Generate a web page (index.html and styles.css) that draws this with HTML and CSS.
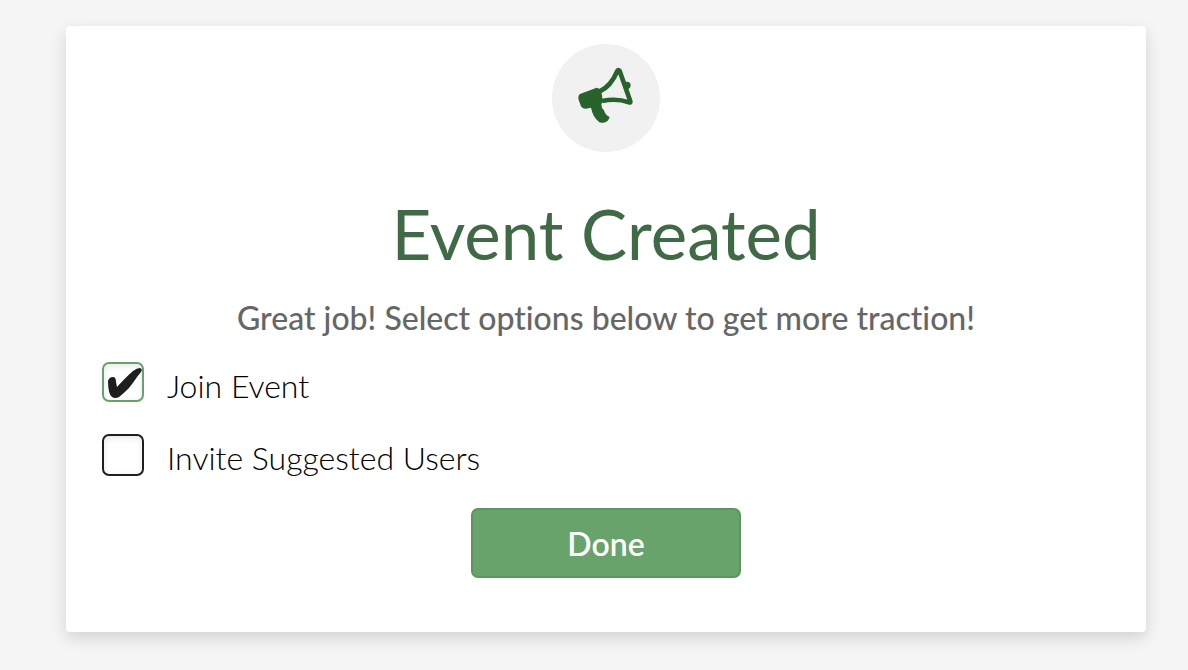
FILE: index.html
```html
<!DOCTYPE html>
<html lang="en">
<head>
  <meta charset="UTF-8">
  <meta name="viewport" content="width=device-width, initial-scale=1">
  <title>Event Created</title>
  <link rel="stylesheet" href="styles.css">
</head>
<body>
  <main class="card">
    <div class="card-icon">
      <svg viewBox="3 9 210 210" aria-hidden="true">
        <path class="horn" d="M88 95 C112 84 130 62 142 33 Q145 28 149 33 L181 124 Q182 129 177 127 C152 118 124 117 96 123"/>
        <path class="body" d="M30 102 L80 83 L92 88 Q97 106 98 124 L94 133 Q94 144 102 151 Q104 164 119 171 Q115 186 101 188 Q89 190 85 184 Q68 169 63 143 L48 146 Q37 147 33 139 L26 120 Q23 107 30 102 Z"/>
        <path class="body" d="M161 68 C172 62 183 66 182 77 Q180 87 169 89 Z"/>
      </svg>
    </div>
    <h1 class="title">Event Created</h1>
    <form class="options">
      <p class="subtitle">Great job! Select options below to get more traction!</p>
      <div class="option">
        <input type="checkbox" class="checkbox" id="join" checked>
        <label for="join">Join Event</label>
      </div>
      <div class="option">
        <input type="checkbox" class="checkbox" id="invite">
        <label for="invite">Invite Suggested Users</label>
      </div>
      <button type="button" class="done">Done</button>
    </form>
  </main>
</body>
</html>
```
FILE: styles.css
```css
* {
  box-sizing: border-box;
}

body {
  margin: 0;
  padding: 26px 42px 38px 66px;
  background: #f5f5f5;
  font-family: Lato, sans-serif;
  font-variant-ligatures: none;
}

.card {
  padding: 18px 36px 54px;
  background: #fff;
  border-radius: 4px;
  box-shadow: 0 6px 16px rgba(0, 0, 0, 0.14);
}

.card-icon {
  display: flex;
  align-items: center;
  justify-content: center;
  width: 108px;
  height: 108px;
  margin: 0 auto;
  border-radius: 50%;
  background: #f1f1f1;
}

.card-icon svg {
  width: 70px;
  height: 70px;
}

.horn {
  fill: none;
  stroke: #28632b;
  stroke-width: 14;
  stroke-linejoin: round;
}

.body {
  fill: #28632b;
}

.title {
  margin: 40px 0 22px;
  color: #406a46;
  font-size: 69px;
  font-weight: 400;
  line-height: 84px;
  text-align: center;
}

.subtitle {
  margin: 0 0 24px;
  color: #666;
  font-size: 32px;
  font-weight: 500;
  line-height: 40px;
  text-align: center;
}

.option {
  display: flex;
  align-items: flex-start;
  gap: 23px;
  margin-bottom: 30px;
  color: #000;
  font-size: 32px;
  font-weight: 300;
  line-height: 42px;
}

.option:last-of-type {
  margin-bottom: 32px;
}

.option label {
  padding-top: 3px;
  margin-bottom: -3px;
}

.checkbox {
  appearance: none;
  width: 42px;
  height: 42px;
  margin: 0;
  border: 2px solid #1e1e1e;
  border-radius: 7px;
  background: #fff;
  box-shadow: inset 0 2px 6px rgba(0, 0, 0, 0.1);
}

.checkbox:checked {
  height: 40px;
  border-color: #68a26b;
}

/* tick mark */
.checkbox:checked::before {
  content: "";
  display: block;
  width: 38px;
  height: 36px;
  background: #1e1e1e;
  clip-path: path("M4 17 Q5 13 9 13 Q12 13 12 18 L13 23 Q22 13 29 7 Q33 4 36 4 Q39 5 37 8 C32 14 29 19 25 24 Q19 30 15 33 Q11 35 8 33 Q4 30 4 17 Z");
}

.done {
  display: block;
  width: 270px;
  height: 70px;
  margin: 0 auto;
  padding: 0;
  border: 2px solid #5c955f;
  border-radius: 7px;
  background: #68a36b;
  color: #fff;
  font-family: inherit;
  font-size: 32px;
  font-weight: 600;
  cursor: pointer;
}
```
